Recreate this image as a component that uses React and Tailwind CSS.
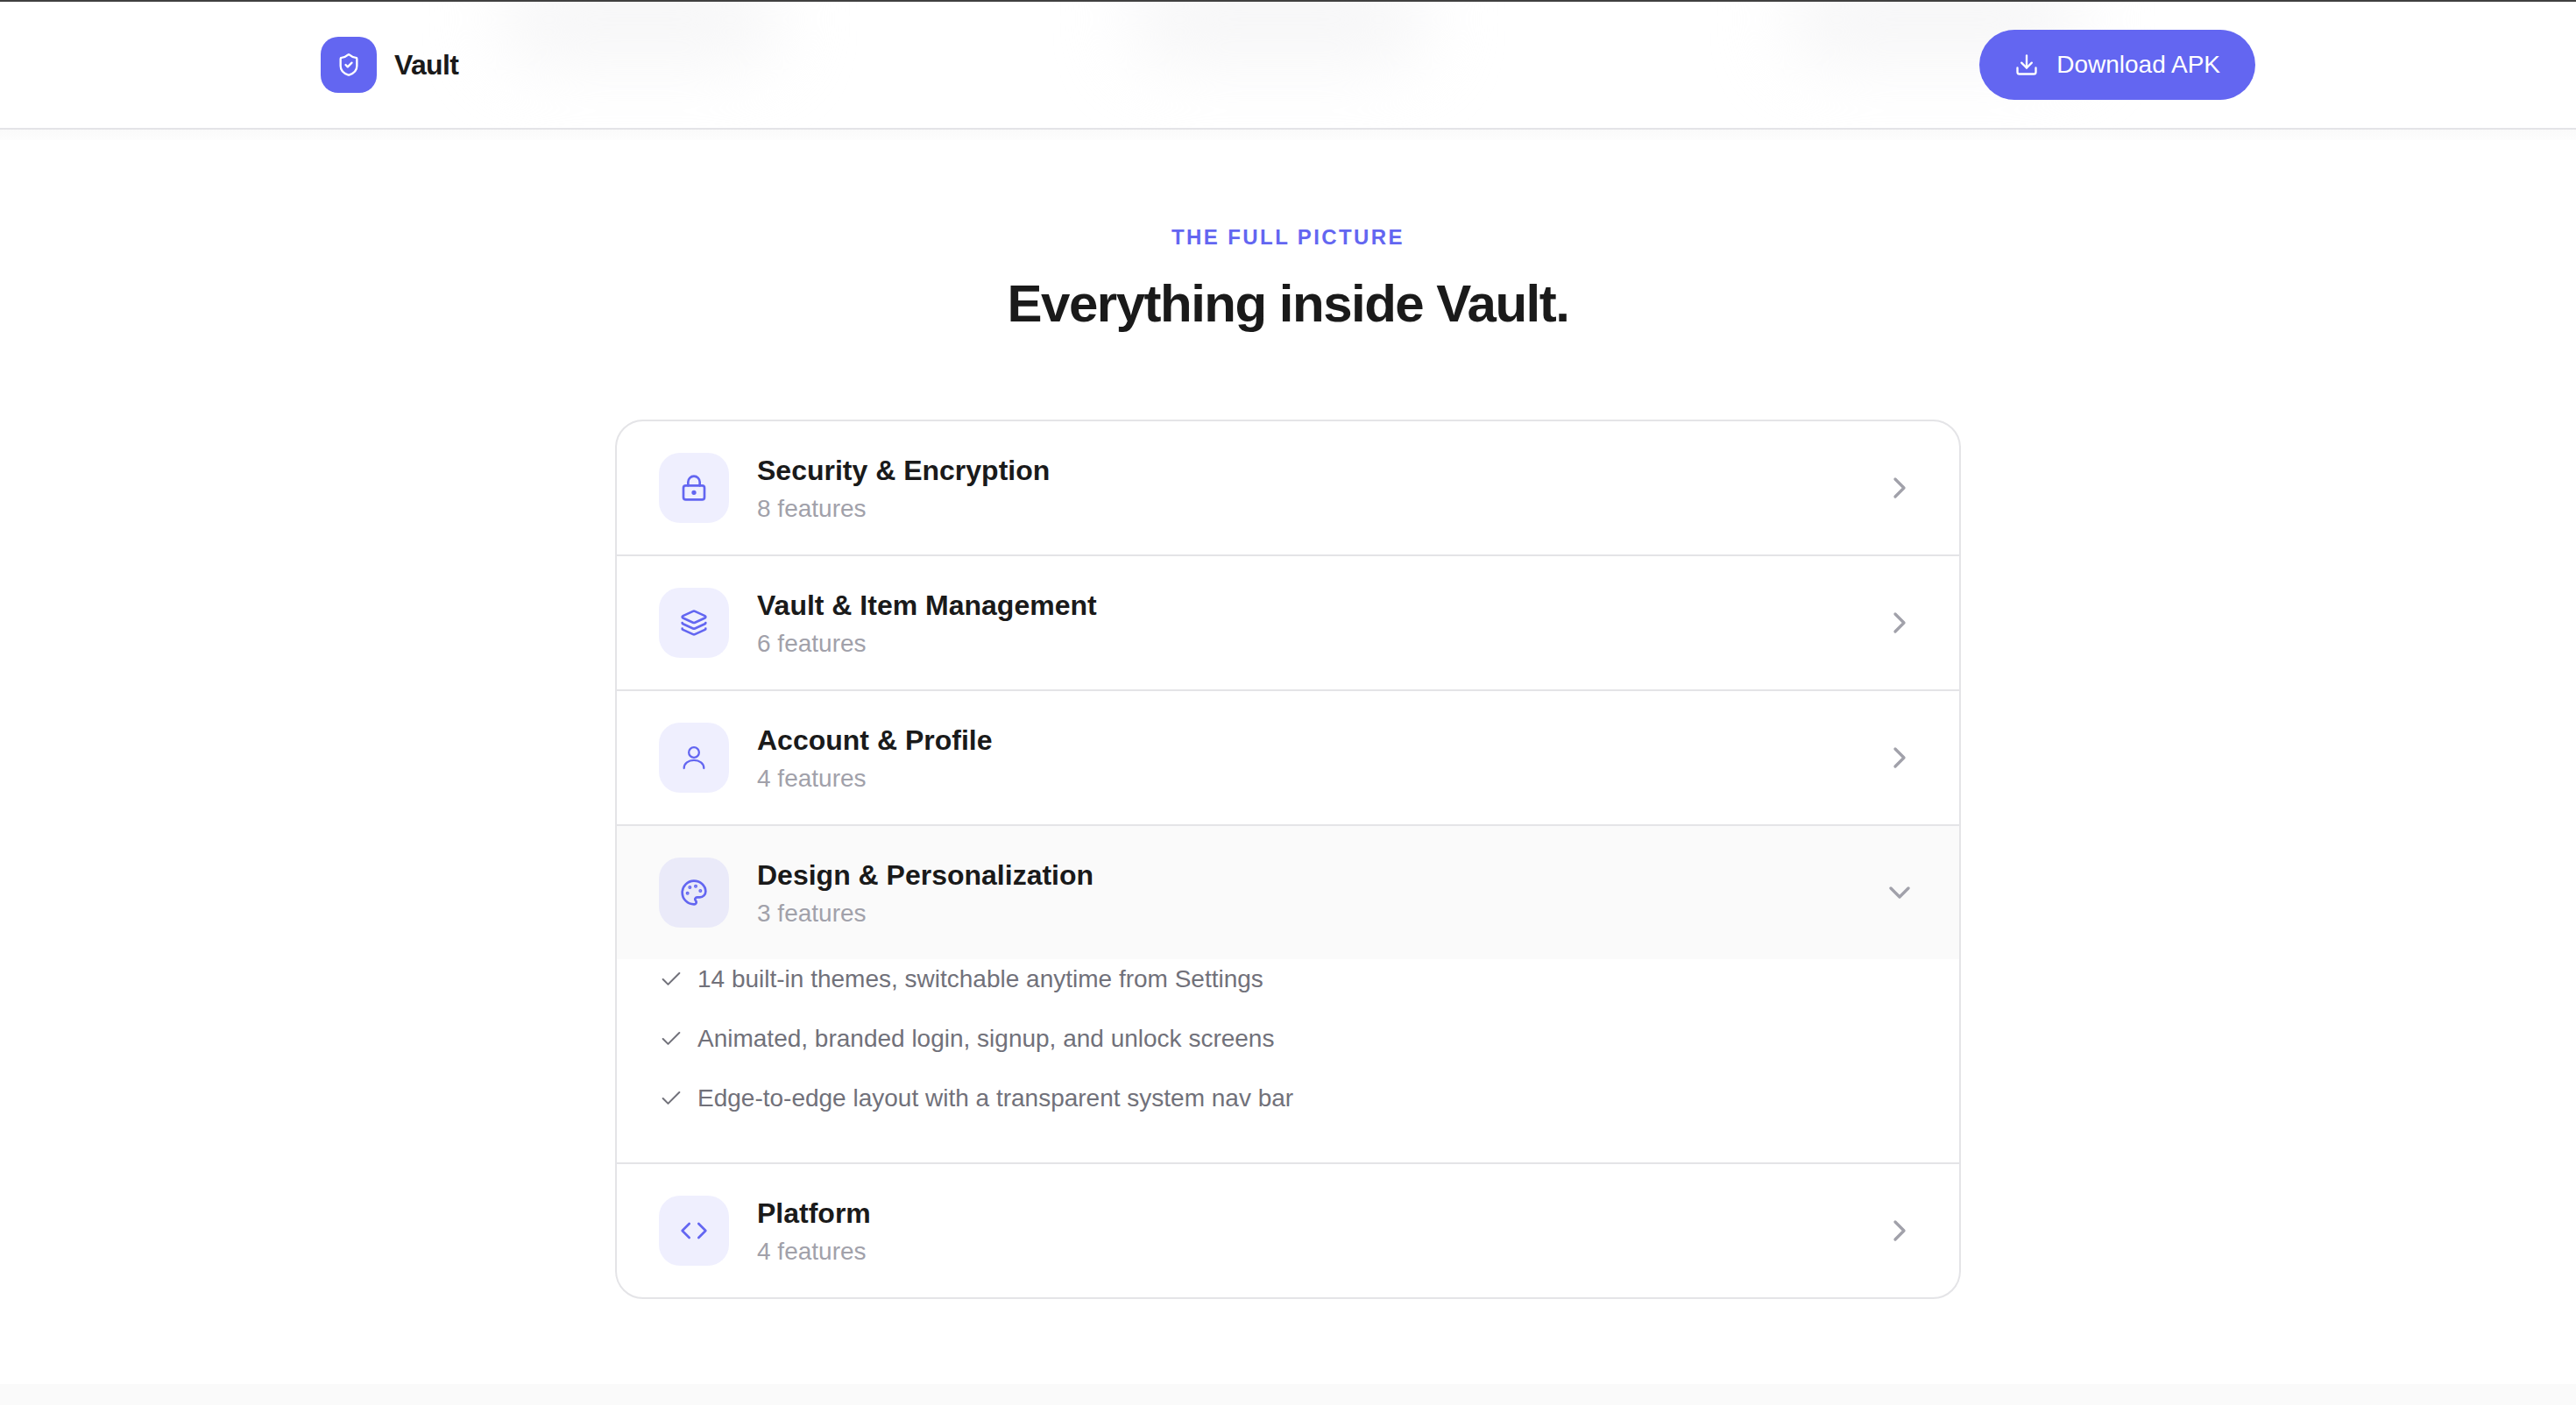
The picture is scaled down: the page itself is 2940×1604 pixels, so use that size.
import { Check, ChevronDown, ChevronRight, Code, Download, Layers, LockKeyhole, Palette, ShieldCheck } from 'lucide-react'

function UserIcon({ size, className }) {
  return (
    <svg width={size} height={size} viewBox="0 0 24 24" fill="none" stroke="currentColor" strokeWidth="1.7" strokeLinecap="round" className={className}>
      <circle cx="12" cy="7.5" r="4.4" />
      <path d="M3.5 21c0-4 3.8-6.8 8.5-6.8s8.5 2.8 8.5 6.8" />
    </svg>
  )
}

const sections = [
  { title: 'Security & Encryption', count: 8, Icon: LockKeyhole },
  { title: 'Vault & Item Management', count: 6, Icon: Layers },
  { title: 'Account & Profile', count: 4, Icon: UserIcon },
  {
    title: 'Design & Personalization',
    count: 3,
    Icon: Palette,
    open: true,
    items: [
      '14 built-in themes, switchable anytime from Settings',
      'Animated, branded login, signup, and unlock screens',
      'Edge-to-edge layout with a transparent system nav bar',
    ],
  },
  { title: 'Platform', count: 4, Icon: Code },
]

function SectionRow({ section }) {
  const { title, count, Icon, open, items } = section
  return (
    <div className="border-b-2 border-[#e4e4e7] last:border-b-0">
      <div className={`flex items-center gap-8 px-12 h-[152px] ${open ? 'bg-[#fafafa]' : ''}`}>
        <div className="flex items-center justify-center w-20 h-20 shrink-0 rounded-[24px] bg-[#6366f1]/10 text-[#6366f1]">
          <Icon size={32} className="shrink-0" />
        </div>
        <div className="flex-1 min-w-0 pt-0.5">
          <div className="text-[32px] leading-[44px] font-bold text-[#1a1a1a]">{title}</div>
          <div className="mt-0.5 text-[28px] leading-[40px] text-[#a1a1aa]">{count} features</div>
        </div>
        {open
          ? <ChevronDown size={40} className="text-[#a1a1aa] shrink-0" />
          : <ChevronRight size={40} className="text-[#a1a1aa] shrink-0" />}
      </div>
      {open && (
        <ul className="flex flex-col gap-6 h-[232px] pl-12 pr-12 pt-px">
          {items.map(item => (
            <li key={item} className="flex items-center gap-4 h-11 text-[28px] leading-[44px] text-[#71717a]">
              <Check size={28} strokeWidth={1.7} className="shrink-0" />
              {item}
            </li>
          ))}
        </ul>
      )}
    </div>
  )
}

export default function App() {
  return (
    <div className="flex flex-col h-screen overflow-hidden bg-white font-['Liberation_Sans',Arial,sans-serif]">
      <header className="relative overflow-hidden shrink-0 h-[148px] border-t-2 border-b-2 border-t-[#404040] border-b-[#e4e4e7] bg-white">
        <div className="absolute left-[570px] -top-[30px] w-[320px] h-[100px] rounded-full bg-[#f6f6f7] blur-[40px]" />
        <div className="absolute left-[1290px] -top-[30px] w-[340px] h-[100px] rounded-full bg-[#f6f6f7] blur-[40px]" />
        <div className="absolute left-[2040px] -top-[30px] w-[340px] h-[100px] rounded-full bg-[#f6f6f7] blur-[40px]" />
        <div className="relative flex items-center justify-between h-full max-w-[2304px] mx-auto px-12">
          <div className="flex items-center gap-5">
            <div className="flex items-center justify-center w-16 h-16 rounded-[20px] bg-[#6366f1] text-white">
              <ShieldCheck size={28} />
            </div>
            <span className="text-[32px] font-bold tracking-[-0.02em] text-[#1a1a1a]">Vault</span>
          </div>
          <button className="flex items-center gap-5 h-20 px-10 rounded-full bg-[#6366f1] text-white text-[28px]">
            <Download size={28} />
            Download APK
          </button>
        </div>
      </header>
      <div className="h-3 shrink-0 bg-gradient-to-b from-[#fafafa] to-[#fdfdfd]" />

      <main className="shrink-0 pt-[93px] pb-[97px] bg-white">
        <p className="text-center text-[24px] leading-[36px] font-bold tracking-[0.1em] text-[#6366f1]">THE FULL PICTURE</p>
        <h2 className="mt-[22px] text-center text-[60px] leading-[72px] font-bold tracking-[-0.025em] text-[#1a1a1a]">Everything inside Vault.</h2>
        <div className="mt-[96px] w-[1536px] mx-auto overflow-hidden border-2 border-[#e4e4e7] rounded-[32px]">
          {sections.map(s => <SectionRow key={s.title} section={s} />)}
        </div>
      </main>
      <div className="flex-1 bg-[#fafafa]" />
    </div>
  )
}
